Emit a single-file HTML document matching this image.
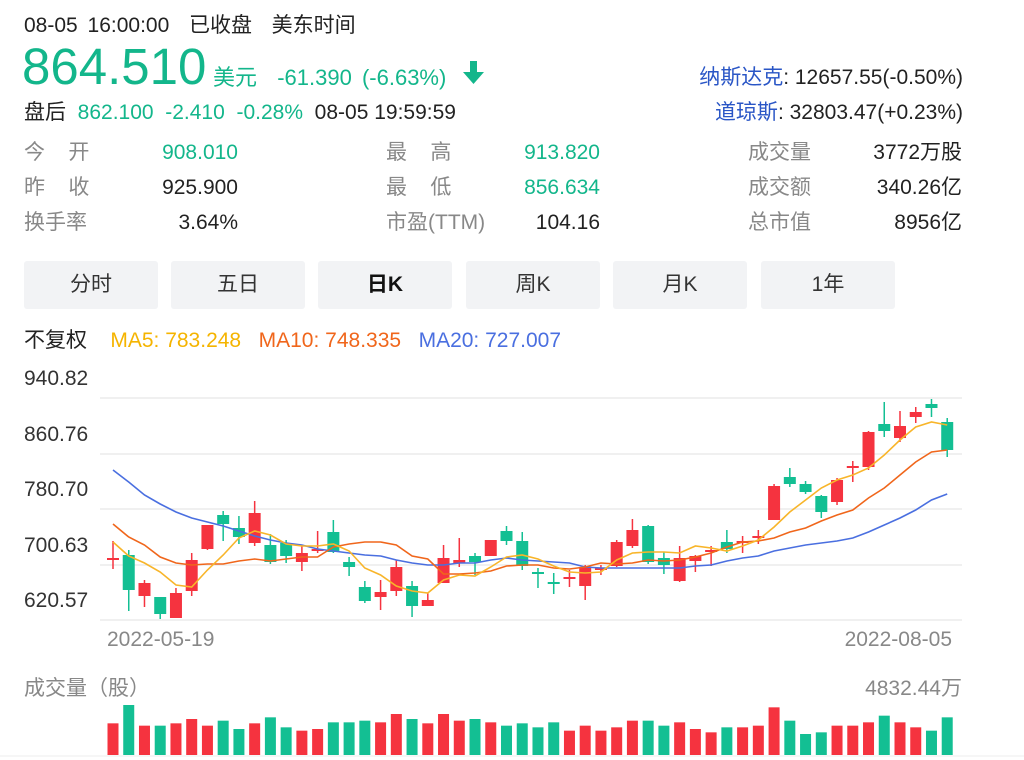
<!DOCTYPE html>
<html><head><meta charset="utf-8"><style>
body{margin:0;width:1024px;height:760px;background:#fff;font-family:"Liberation Sans","Noto Sans CJK SC",sans-serif;color:#222;position:relative;overflow:hidden}
.a{position:absolute;white-space:nowrap}
.g{color:#13b68b}.gr{color:#888}
.tab{position:absolute;top:261px;width:134px;height:48px;background:#f2f3f5;border-radius:3px;text-align:center;line-height:48px;font-size:21px;color:#333}
</style></head><body>
<div class="a" style="left:24px;top:9px;font-size:21px;word-spacing:4px">08-05 16:00:00&nbsp;&nbsp;已收盘&nbsp;&nbsp;美东时间</div>
<div class="a g" style="left:22px;top:38px;font-size:51px;line-height:58px">864.510</div>
<div class="a g" style="left:213px;top:60px;font-size:22px;word-spacing:4px">美元&nbsp;&nbsp;-61.390 (-6.63%)</div>
<svg class="a" style="left:462px;top:60px" width="24" height="26"><rect x="8" y="1" width="7" height="13" fill="#13b68b"/><path d="M1 12 L22 12 L11.5 24 Z" fill="#13b68b"/></svg>
<div class="a" style="left:24px;top:96px;font-size:21px">盘后&nbsp;&nbsp;<span class="g">862.100&nbsp;&nbsp;-2.410&nbsp;&nbsp;-0.28%</span>&nbsp;&nbsp;08-05 19:59:59</div>
<div class="a" style="right:61px;top:61px;font-size:21px"><span style="color:#2a56c6">纳斯达克</span>: 12657.55(-0.50%)</div>
<div class="a" style="right:61px;top:96px;font-size:21px"><span style="color:#2a56c6">道琼斯</span>: 32803.47(+0.23%)</div>

<div class="a gr" style="left:24px;top:135px;font-size:21px;line-height:35px">今&nbsp;&nbsp;&nbsp;&nbsp;开<br>昨&nbsp;&nbsp;&nbsp;&nbsp;收<br>换手率</div>
<div class="a" style="right:786px;top:135px;font-size:21px;line-height:35px;text-align:right"><span class="g">908.010</span><br>925.900<br>3.64%</div>
<div class="a gr" style="left:386px;top:135px;font-size:21px;line-height:35px">最&nbsp;&nbsp;&nbsp;&nbsp;高<br>最&nbsp;&nbsp;&nbsp;&nbsp;低<br>市盈(TTM)</div>
<div class="a" style="right:424px;top:135px;font-size:21px;line-height:35px;text-align:right"><span class="g">913.820</span><br><span class="g">856.634</span><br>104.16</div>
<div class="a gr" style="left:748px;top:135px;font-size:21px;line-height:35px">成交量<br>成交额<br>总市值</div>
<div class="a" style="right:62px;top:135px;font-size:21px;line-height:35px;text-align:right">3772万股<br>340.26亿<br>8956亿</div>

<div class="tab" style="left:24px">分时</div>
<div class="tab" style="left:171px">五日</div>
<div class="tab" style="left:318px;font-weight:bold;color:#111">日K</div>
<div class="tab" style="left:466px">周K</div>
<div class="tab" style="left:613px">月K</div>
<div class="tab" style="left:761px">1年</div>

<div class="a" style="left:24px;top:324px;font-size:21px">不复权&nbsp;&nbsp;&nbsp;&nbsp;<span style="color:#f5b400">MA5: 783.248</span>&nbsp;&nbsp;&nbsp;<span style="color:#f0661b">MA10: 748.335</span>&nbsp;&nbsp;&nbsp;<span style="color:#4a6fe0">MA20: 727.007</span></div>
<div class="a" style="left:24px;top:351px;font-size:21px;line-height:55.5px;color:#333">940.82<br>860.76<br>780.70<br>700.63<br>620.57</div>
<div class="a gr" style="left:107px;top:628px;font-size:21px">2022-05-19</div>
<div class="a gr" style="right:72px;top:628px;font-size:21px">2022-08-05</div>
<div class="a gr" style="left:24px;top:672px;font-size:21px">成交量（股）</div>
<div class="a gr" style="right:62px;top:672px;font-size:21px">4832.44万</div>
<svg class="a" id="c" style="left:0;top:0" width="1024" height="760"></svg>
<script>
var C=[[558,558,541,569],[555,590,550,611,1],[583,596,580,607],[597,614,597,619,1],[593,618,588,618],[560,591,553,596],[525,549,525,550],[515,524,511,541,1],[528,537,516,544,1],[513,543,501,546],[545,562,534,564,1],[543,556,540,563,1],[553,562,545,571],[549,551,531,553],[532,552,520,553,1],[562,567,557,576,1],[587,601,581,603,1],[592,597,580,610],[567,591,560,596],[586,606,581,617,1],[600,606,593,606],[558,583,545,583],[560,563,538,567],[556,562,553,575,1],[540,556,540,556],[531,541,526,545,1],[541,566,532,570,1],[572,574,568,588,1],[582,582,573,594,1],[577,577,570,587],[567,586,565,600],[568,568,565,575],[542,566,540,567],[530,546,519,548],[526,562,525,564,1],[558,565,552,574,1],[558,581,546,582],[556,561,555,572],[550,550,546,566],[542,549,530,553,1],[541,541,536,553],[536,536,530,544],[486,520,484,520],[477,484,468,487,1],[484,492,481,494,1],[496,512,495,518,1],[480,502,478,505],[466,466,461,482],[432,467,431,470],[424,431,402,437,1],[426,438,411,442],[412,417,407,423],[404,408,399,417,1],[422,450,418,457,1]];
var V=[190,135,197,197,190,177,197,182,207,190,172,202,212,207,187,187,182,187,162,177,190,162,182,177,187,197,190,202,187,212,197,212,202,182,182,197,187,207,217,202,202,197,142,182,222,217,197,197,187,167,187,202,212,172];
var M5=[542,556,563,572,585,587,570,555,538,531,535,544,546,546,544,551,568,575,586,591,593,580,575,576,567,557,555,559,566,572,573,572,560,553,552,552,553,546,548,551,546,540,527,512,500,488,480,475,468,455,440,427,422,425];
var M10=[524,537,545,557,563,565,564,564,561,559,561,559,557,557,547,544,542,542,545,556,559,574,574,573,571,566,565,565,568,569,567,563,564,563,560,561,560,557,553,547,542,541,538,532,528,521,515,510,498,488,475,462,452,450];
var M20=[470,482,495,504,512,518,522,526,531,536,540,543,545,549,551,553,555,556,560,563,565,565,563,563,560,558,560,561,562,563,567,568,568,568,568,568,568,566,565,561,558,556,551,548,545,543,541,538,532,525,518,510,500,494];
var s='';[398,454,509,565,620].forEach(function(y){s+='<line x1="100" x2="962" y1="'+y+'" y2="'+y+'" stroke="#ececec" stroke-width="1.5"/>'});
s+='<line x1="0" x2="1024" y1="756" y2="756" stroke="#eee"/>';
function X(i){return 113+i*15.74}
C.forEach(function(c,i){var x=X(i),col=c[4]?'#13bf93':'#f5333f',t=Math.min(c[0],c[1]),h=Math.max(Math.abs(c[1]-c[0]),2);
s+='<line x1="'+x+'" x2="'+x+'" y1="'+c[2]+'" y2="'+c[3]+'" stroke="'+col+'" stroke-width="1.5"/>';
s+='<rect x="'+(x-6)+'" y="'+t+'" width="12" height="'+h+'" fill="'+col+'"/>';
var vy=660+V[i]/3;s+='<rect x="'+(x-5.5)+'" y="'+vy+'" width="11" height="'+(755-vy)+'" fill="'+col+'"/>';});
function P(a,col){var p=a.map(function(y,i){return X(i).toFixed(1)+','+y}).join(' ');return '<polyline points="'+p+'" fill="none" stroke="'+col+'" stroke-width="1.6"/>'}
s+=P(M20,'#4a6fe0')+P(M10,'#f0661b')+P(M5,'#f8b52a');
document.getElementById('c').innerHTML=s;
</script>
</body></html>
